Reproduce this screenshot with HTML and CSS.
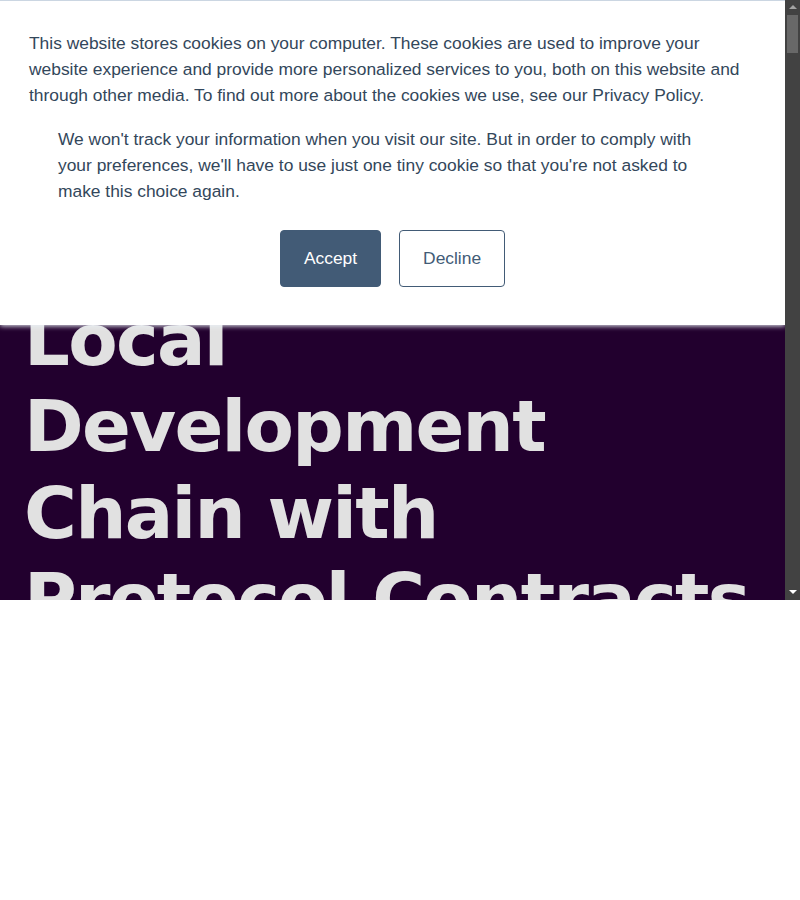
FILE: index.html
```html
<!DOCTYPE html>
<html lang="en">
<head>
<meta charset="utf-8">
<title>Local Development Chain with Protocol Contracts</title>
<link rel="stylesheet" href="styles.css">
</head>
<body>
<div class="frame">
  <div class="viewport">
    <main class="hero">
      <h1 class="hero-title">Local Development Chain with Protocol Contracts</h1>
    </main>
    <div class="cookie-banner">
      <p class="policy">This website stores cookies on your computer. These cookies are used to improve your website experience and provide more personalized services to you, both on this website and through other media. To find out more about the cookies we use, see our Privacy Policy.</p>
      <p class="disclaimer">We won't track your information when you visit our site. But in order to comply with your preferences, we'll have to use just one tiny cookie so that you're not asked to make this choice again.</p>
      <div class="actions">
        <button class="btn btn-accept">Accept</button>
        <button class="btn btn-decline">Decline</button>
      </div>
    </div>
  </div>
  <div class="scrollbar">
    <div class="arrow arrow-up"></div>
    <div class="track"><div class="thumb"></div></div>
    <div class="arrow arrow-down"></div>
  </div>
</div>
</body>
</html>
```
FILE: styles.css
```css
html, body {
  margin: 0;
  padding: 0;
  background: #ffffff;
}

.frame {
  display: flex;
  width: 800px;
  height: 600px;
}

.viewport {
  position: relative;
  width: 785px;
  height: 600px;
  overflow: hidden;
  background: #22002e;
}

.hero {
  padding: 297px 24px 0 24px;
}

.hero-title {
  margin: 0;
  font-family: "DejaVu Sans", sans-serif;
  font-weight: bold;
  font-size: 72px;
  line-height: 1.2;
  letter-spacing: -1.7px;
  color: #e1e1e1;
}

.cookie-banner {
  position: absolute;
  top: 0;
  left: 0;
  right: 0;
  box-sizing: border-box;
  background: #ffffff;
  border-top: 1px solid #cbd6e2;
  box-shadow: 0 1px 5px 0 #eaf0f6;
  padding: 29px 29px 38px 29px;
  font-family: "Liberation Sans", Arial, Helvetica, sans-serif;
  font-size: 17.4px;
  line-height: 26px;
  color: #33475b;
}

.policy {
  margin: 0 0 18px 0;
}

.disclaimer {
  margin: 0 29px 26px 29px;
}

.actions {
  display: flex;
  justify-content: center;
  gap: 18px;
}

.btn {
  font-family: "Liberation Sans", Arial, Helvetica, sans-serif;
  font-size: 17.4px;
  line-height: 25px;
  padding: 15px 23px;
  border: 1px solid #425b76;
  border-radius: 4px;
  margin: 0;
}

.btn-accept {
  background: #425b76;
  color: #ffffff;
}

.btn-decline {
  background: #ffffff;
  color: #425b76;
}

.scrollbar {
  width: 15px;
  height: 600px;
  background: #424242;
  display: flex;
  flex-direction: column;
  align-items: center;
}

.arrow {
  width: 0;
  height: 0;
  border-left: 4px solid transparent;
  border-right: 4px solid transparent;
}

.arrow-up {
  margin-top: 5px;
  border-bottom: 4px solid #a3a3a3;
}

.arrow-down {
  margin-bottom: 6px;
  border-top: 4px solid #ffffff;
}

.track {
  flex: 1;
  width: 100%;
  padding-top: 6px;
}

.thumb {
  width: 11px;
  height: 38px;
  margin-left: 2px;
  background: #686868;
}
```
